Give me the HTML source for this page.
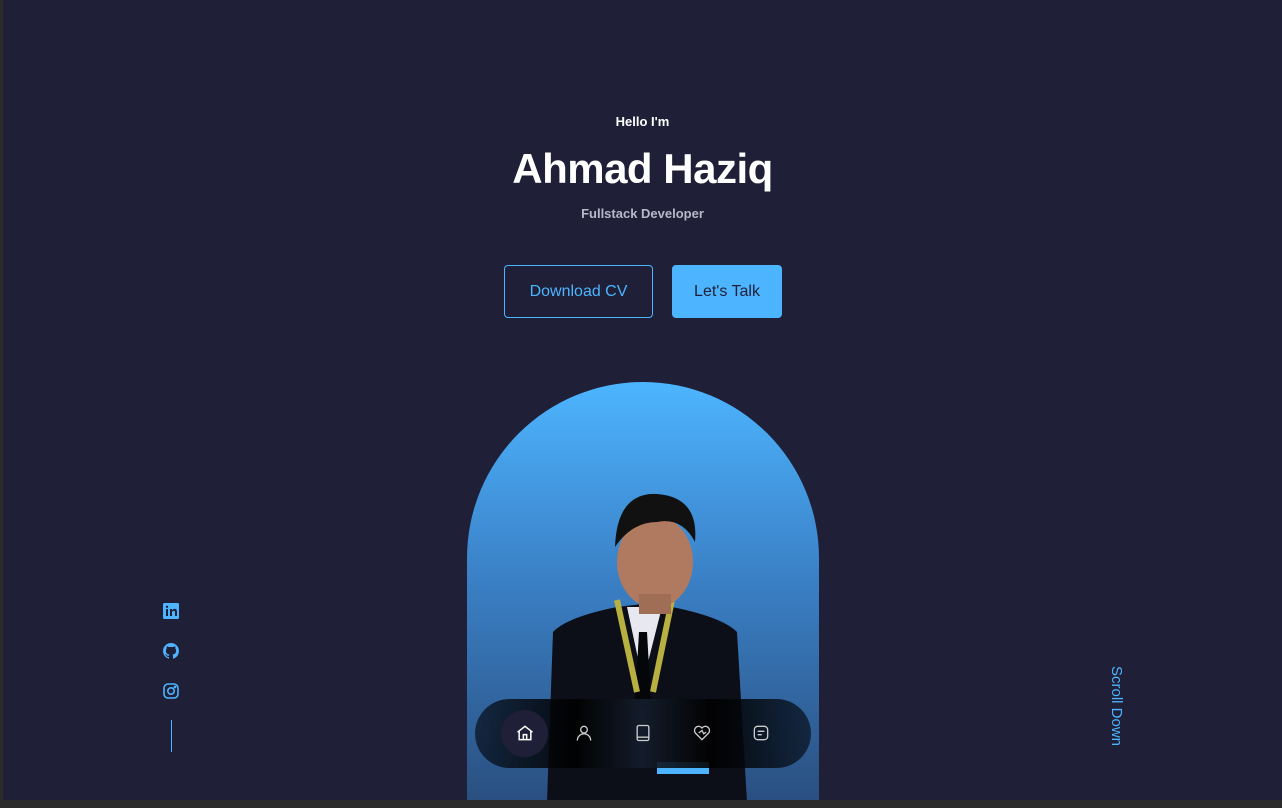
<!DOCTYPE html>
<html><head><meta charset="utf-8">
<style>
html,body{margin:0;padding:0;}
body{width:1282px;height:808px;overflow:hidden;background:#2b2b2b;font-family:"Liberation Sans",sans-serif;position:relative;}
#page{position:absolute;left:3px;top:0;width:1279px;height:800px;background:#1f1f38;overflow:hidden;}
.t{position:absolute;left:0;width:100%;text-align:center;color:#fff;}
.btn{position:absolute;top:265px;height:53px;box-sizing:border-box;border-radius:4px;font-size:16px;display:flex;align-items:center;justify-content:center;}
.arch{position:absolute;left:464px;top:382px;width:352px;height:420px;border-radius:176px 176px 0 0;background:linear-gradient(#4db5ff 0%,#3b82c8 45%,#2a4f80 100%);overflow:hidden;}
.nav{position:absolute;left:472px;top:699px;width:336px;height:69px;border-radius:35px;background:linear-gradient(90deg,rgba(10,20,35,.75),rgba(0,0,0,.9) 30%,rgba(20,30,45,.9) 50%,rgba(0,0,0,.9) 70%,rgba(10,20,35,.75));}
.ic{position:absolute;top:24px;width:20px;height:20px;}
.soc{position:absolute;left:160px;}
</style></head><body>
<div id="page">
<div class="t" style="top:114px;font-size:13px;font-weight:bold;">Hello I'm</div>
<div class="t" style="top:145px;font-size:42px;font-weight:bold;letter-spacing:-0.5px;">Ahmad Haziq</div>
<div class="t" style="top:206px;font-size:13px;font-weight:bold;color:#b8b8c8;">Fullstack Developer</div>
<div class="btn" style="left:501px;width:149px;border:1px solid #4db5ff;color:#4db5ff;">Download CV</div>
<div class="btn" style="left:669px;width:110px;background:#4db5ff;color:#1f1f38;">Let's Talk</div>

<div class="arch">
<svg width="352" height="420" viewBox="0 0 352 420">
<path d="M80 420 L86 250 Q100 235 150 225 L176 222 L205 225 Q255 235 270 250 L280 420Z" fill="#0d0f18"/>
<path d="M160 225 L176 300 L195 225Z" fill="#e8e8f0"/>
<path d="M172 250 L180 250 L184 320 L176 330 L168 320Z" fill="#05060a"/>
<path d="M150 218 L170 310 M205 218 L186 310" stroke="#b8b040" stroke-width="6" fill="none"/>
<ellipse cx="188" cy="180" rx="38" ry="46" fill="#b07a60"/>
<path d="M148 165 Q150 110 190 112 Q232 115 228 160 Q215 135 190 140 Q165 140 148 165Z" fill="#111"/>
<rect x="172" y="212" width="32" height="20" fill="#a06e55"/>
<rect x="190" y="380" width="52" height="12" fill="#4db5ff"/>
</svg>
</div>

<div class="nav">
<div style="position:absolute;left:26px;top:11px;width:47px;height:47px;border-radius:50%;background:#1f1f38;"></div>
<svg class="ic" style="left:40px" viewBox="0 0 24 24" fill="none" stroke="#fff" stroke-width="1.8"><path d="M3 11 L12 4 L21 11 M5 9.5V20H19V9.5 M10 20v-6h4v6"/></svg>
<svg class="ic" style="left:99px" viewBox="0 0 24 24" fill="none" stroke="#ccc" stroke-width="1.6"><circle cx="12" cy="8" r="4"/><path d="M4 21c0-5 4-8 8-8s8 3 8 8"/></svg>
<svg class="ic" style="left:158px" viewBox="0 0 24 24" fill="none" stroke="#ccc" stroke-width="1.6"><rect x="5" y="3" width="14" height="18" rx="2"/><path d="M5 17h14"/></svg>
<svg class="ic" style="left:217px" viewBox="0 0 24 24" fill="none" stroke="#ccc" stroke-width="1.6"><path d="M12 20 L4 12 A4.5 4.5 0 0 1 12 6 A4.5 4.5 0 0 1 20 12Z M8 12 L12 9 L14 13 L17 11"/></svg>
<svg class="ic" style="left:276px" viewBox="0 0 24 24" fill="none" stroke="#ccc" stroke-width="1.6"><rect x="4" y="4" width="16" height="16" rx="4"/><path d="M8 10h8 M8 14h5"/></svg>
</div>

<svg class="soc" style="top:603px" width="16" height="16" viewBox="0 0 16 16"><rect width="16" height="16" rx="1.5" fill="#4db5ff"/><rect x="3" y="6" width="2" height="7" fill="#1f1f38"/><circle cx="4" cy="3.8" r="1.2" fill="#1f1f38"/><path d="M7 6h2v1.2q1-1.4 2.5-1.4Q14 5.8 14 9v4h-2V9.5q0-1.7-1.3-1.7Q9 7.8 9 9.5V13H7Z" fill="#1f1f38"/></svg>
<svg class="soc" style="top:643px" width="16" height="16" viewBox="0 0 16 16"><path fill="#4db5ff" d="M8 0C3.58 0 0 3.58 0 8c0 3.54 2.290 6.53 5.47 7.59.4.07.55-.17.55-.38v-1.34c-2.23.48-2.7-1.07-2.7-1.070-.36-.92-.89-1.17-.89-1.17-.73-.5.05-.49.05-.49.8.06 1.23.83 1.23.83.72 1.23 1.87.87 2.33.67.07-.52.28-.87.5-1.07-1.78-.2-3.64-.89-3.64-3.95 0-.87.31-1.59.82-2.15-.08-.2-.36-1.02.08-2.12 0 0 .67-.21 2.2.82.64-.18 1.32-.27 2-.27.68 0 1.36.09 2 .27 1.53-1.04 2.2-.82 2.2-.82.44 1.1.16 1.92.08 2.12.51.56.82 1.27.82 2.15 0 3.07-1.87 3.75-3.65 3.95.29.25.54.73.54 1.48v2.2c0 .21.15.46.55.38A8.01 8.01 0 0016 8c0-4.42-3.58-8-8-8z"/></svg>
<svg class="soc" style="top:683px" width="16" height="16" viewBox="0 0 16 16" fill="none" stroke="#4db5ff" stroke-width="1.6"><rect x="1" y="1" width="14" height="14" rx="4"/><circle cx="8" cy="8" r="3.2"/><circle cx="12" cy="4" r=".6" fill="#4db5ff"/></svg>
<div style="position:absolute;left:168px;top:720px;width:1px;height:32px;background:#4db5ff;"></div>

<div style="position:absolute;left:1105px;top:666px;writing-mode:vertical-rl;color:#4db5ff;font-size:15px;font-weight:300;">Scroll Down</div>
</div>
</body></html>
